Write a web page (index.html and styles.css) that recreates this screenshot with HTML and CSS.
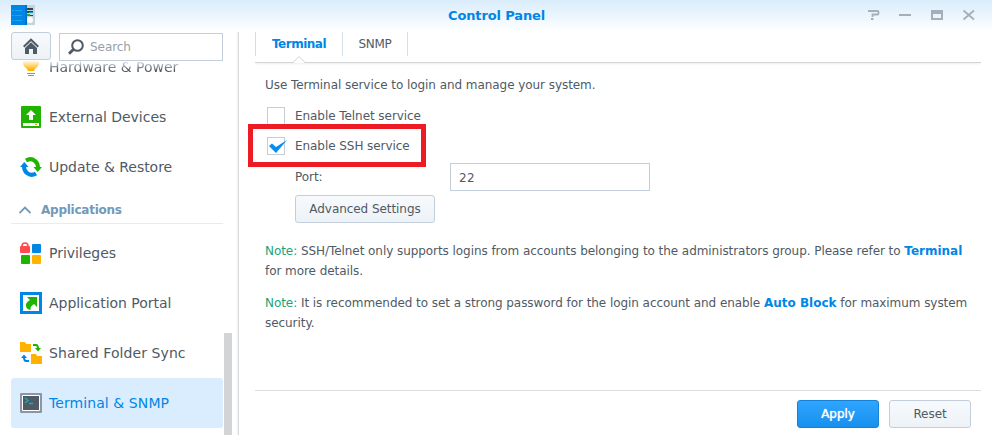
FILE: index.html
```html
<!DOCTYPE html>
<html lang="en">
<head>
<meta charset="utf-8">
<title>Control Panel</title>
<link rel="stylesheet" href="styles.css">
</head>
<body>
<div class="window">
  <header class="titlebar">
    <svg class="app-icon" width="24" height="20" viewBox="0 0 24 20"><path fill="#0086e5" d="M0 0h14v20H0z"/><path fill="#0071c8" d="M14 0h2v20h-2z"/><path fill="#c5d3dc" d="M16 0h8v20h-8z"/><path stroke="#20b7ef" stroke-opacity=".7" d="M1 5.500h2M4 5.500h7M1 10.500h2M4 10.500h7M1 15.500h2M4 15.500h7"/><path stroke="#3a434d" stroke-width="2" d="M16 4h6M16 7h6"/><path stroke="#00a6df" d="M18 7.500h4"/><path stroke="#20b700" stroke-width="2" d="M16 10h3"/><path stroke="#3a434d" d="M19 10.500h3"/><circle cx="19" cy="15" r="3" fill="#fff"/></svg>
    <h1>Control Panel</h1>
    <svg class="controls" width="108" height="12" viewBox="0 0 108 12" fill="none" stroke="#a3b0bb"><path stroke-width="1.800" d="M0 2h9.500q1 0 1 1v1.500q0 1-1 1H4.500V8M3 10h2.500"/><path stroke-width="2" d="M31 6h12"/><path fill="#a3b0bb" stroke="none" fill-rule="evenodd" d="M63 1h12v10H63zM65 5v4h8V5z"/><path stroke-width="1.800" d="M95.500 1.500l10.500 9M106 1.500l-10.500 9"/></svg>
  </header>
  <div class="body">
    <aside class="sidebar">
      <div class="toolbar">
        <button class="home" aria-label="Home"><svg width="16" height="16" viewBox="0 0 16 16"><path fill="none" stroke="#505a64" stroke-width="2" d="M.7 8.700L8 1.700l7.300 7"/><path fill="#505a64" d="M2 10l6-5.800 6 5.800v6h-4v-5H6v5H2z"/></svg></button>
        <div class="search"><svg width="16" height="16" viewBox="0 0 16 16" fill="none" stroke="#505a64"><circle cx="9.500" cy="6.500" r="5.300" stroke-width="2"/><path stroke-width="3" d="M5.300 10.500L1 14.800"/></svg><span>Search</span></div>
      </div>
      <nav class="list">
        <a class="item first"><svg width="22" height="22" viewBox="0 0 22 22"><path fill="#ffb300" d="M3 7a8 8 0 0116 0q0 3-4 6l-1 2H8l-1-2Q3 10 3 7z"/><path stroke="#89949e" d="M7 17.500h8M8 19.500h6"/></svg><span>Hardware &amp; Power</span></a>
        <a class="item"><svg width="22" height="22" viewBox="0 0 22 22"><rect x="1" width="20" height="22" rx="1" fill="#20b300"/><path fill="#fff" d="M11 4l5 5h-3v5H9V9H6zM3 17h16v3H3z"/><path stroke="#ff9600" d="M15 18.500h2"/></svg><span>External Devices</span></a>
        <a class="item"><svg width="22" height="22" viewBox="0 0 22 22" fill="none" stroke-width="4"><path stroke="#20b300" d="M6 4.500Q11 1.500 15 5q3 2 3 7"/><path fill="#20b300" d="M13.500 11H22l-4.300 5z"/><path stroke="#0086e5" d="M16 17.500Q11 20.500 7 17q-3-2-3-7"/><path fill="#0086e5" d="M8.500 11H0l4.300-5z"/></svg><span>Update &amp; Restore</span></a>
        <div class="group"><svg width="12" height="8" viewBox="0 0 12 8"><path fill="none" stroke="#7399b8" stroke-width="1.800" d="M.5 7L6 1.500 11.500 7"/></svg><span>Applications</span></div>
        <a class="item"><svg width="22" height="22" viewBox="0 0 22 22"><path fill="none" stroke="#ff4b4b" stroke-width="1.600" d="M2 6V4q0-3 3-3t3 3v2"/><rect y="4" width="10" height="7" rx="1" fill="#ff4b4b"/><rect x="12" y="2" width="9" height="9" rx="1" fill="#0086e5"/><rect x="1" y="13" width="9" height="9" rx="1" fill="#20b300"/><rect x="12" y="13" width="9" height="9" rx="1" fill="#ffb300"/></svg><span>Privileges</span></a>
        <a class="item"><svg width="22" height="22" viewBox="0 0 22 22"><path fill="#fff" stroke="#0086e5" stroke-width="3" d="M1.500 1.500h19v19h-19z"/><path fill="#20b300" d="M7 5h10v10l-3-3q-4 2-3.500 6Q5 17 6 12q1-2.500 4-4z"/></svg><span>Application Portal</span></a>
        <a class="item"><svg width="22" height="22" viewBox="0 0 22 22"><path fill="#ffb300" d="M0 0h5l1 2h5v8H0zM11 12h5l1 2h5v8H11z"/><path fill="none" stroke="#20b300" stroke-width="2" d="M13 3h3q2 0 2 4"/><path fill="#20b300" d="M15 6h6l-3 3.500z"/><path fill="none" stroke="#0086e5" stroke-width="2" d="M9 19H6q-2 0-2-4"/><path fill="#0086e5" d="M1 16h6l-3-3.500z"/></svg><span class="wide">Shared Folder Sync</span></a>
        <a class="item active"><svg width="22" height="22" viewBox="0 0 22 22"><rect y="1" width="22" height="20" rx="1" fill="#8c96a3"/><path fill="#505a64" stroke="#fff" d="M2.500 3.500h17v15h-17z"/><path fill="none" stroke="#00b8c0" stroke-width="1.300" d="M5 6l3 2.500L5 11M9 11.500h4"/></svg><span class="wide">Terminal &amp; SNMP</span></a>
      </nav>
      <div class="scrollbar"></div>
    </aside>
    <main class="content">
      <div class="tabs"><span class="tab on">Terminal</span><span class="tab">SNMP</span>
      <svg class="notch" width="14" height="8" viewBox="0 0 14 8"><path fill="#fff" stroke="#cdd0d3" d="M0 7.500h1l6-6 6 6h1"/><path stroke="#fff" d="M2 7.500h10"/></svg></div>
      <div class="form">
        <p class="intro">Use Terminal service to login and manage your system.</p>
        <div class="check"><i class="box"></i><span>Enable Telnet service</span></div>
        <div class="check"><i class="box"><svg width="18" height="14" viewBox="0 0 18 14"><path fill="#078ef0" d="M0 7l3-2.500 4 3.500 11-7-11 13z"/></svg></i><span>Enable SSH service</span><div class="highlight"></div></div>
        <div class="field"><span>Port:</span><div class="input">22</div></div>
        <button class="btn adv">Advanced Settings</button>
        <p class="note n1"><em>Note:</em> SSH/Telnet only supports logins from accounts belonging to the administrators group. Please refer to <b>Terminal</b><br>for more details.</p>
        <p class="note n2"><em>Note:</em> It is recommended to set a strong password for the login account and enable <b>Auto Block</b> for maximum system<br>security.</p>
      </div>
      <footer class="footer"><button class="btn primary">Apply</button><button class="btn">Reset</button></footer>
    </main>
  </div>
</div>
</body>
</html>
```
FILE: styles.css
```css
* { box-sizing: border-box; }
body { margin: 0; width: 992px; height: 435px; overflow: hidden; background: #fff; color: #505a64; font: 12px/20px Verdana, "DejaVu Sans", sans-serif; letter-spacing: -0.06px; }
svg { display: block; flex: none; }
p, h1 { margin: 0; }
.window { height: 435px; display: flex; flex-direction: column; background: linear-gradient(#d9ecfb, #fff 32px); }
.titlebar { height: 32px; display: grid; grid-template-columns: 1fr auto 1fr; padding: 0 16px 0 11px; align-items: center; }
.app-icon { margin-top: -2px; }
h1 { color: #0086e5; font: bold 13px/30px Verdana, "DejaVu Sans", sans-serif; letter-spacing: -0.13px; padding-left: 6px; margin: 0; }
.controls { justify-self: end; margin-top: -3px; }
.body { flex: 1; display: flex; min-height: 0; }
.sidebar { width: 239px; position: relative; padding-left: 11px; border-right: 1px solid #dadcdf; overflow: hidden; box-shadow: inset -2px 0 2px -1px #eee; }
.toolbar { display: flex; gap: 8px; height: 29px; }
.home { width: 40px; height: 28px; padding: 0; border: 1px solid #c2cedc; border-radius: 3px; background: linear-gradient(#f7fafd, #edf2f7); display: grid; place-items: center; }
.search { width: 164px; height: 28px; border: 1px solid #c2cedc; margin-top: 1px; display: flex; align-items: center; gap: 6px; padding-left: 8px; background: #fff; color: #96a0aa; }
.list { width: 212px; height: 374px; overflow: hidden; font-size: 14px; letter-spacing: -0.03px; }
.item { height: 50px; display: flex; align-items: center; gap: 7px; padding-left: 9px; border-radius: 3px; }
.item span { white-space: nowrap; }
.wide { letter-spacing: 0.08px; }
.first { margin-top: -19px; height: 50px; -webkit-mask: linear-gradient(transparent 18px, #000 28px); mask: linear-gradient(transparent 18px, #000 28px); }
.active { background: #d9edff; color: #0086e5; }
.group { height: 32px; margin-bottom: 4px; border-bottom: 1px solid #e3edf5; display: flex; align-items: center; gap: 10px; padding: 4px 0 0 8px; color: #7399b8; font-weight: bold; font-size: 12px; letter-spacing: -0.25px; }
.scrollbar { position: absolute; left: 224px; top: 301px; width: 8px; height: 110px; background: #d2d4d6; }
.content { flex: 1; padding: 0 11px 0 16px; display: flex; flex-direction: column; }
.tabs { height: 31px; border-bottom: 1px solid #d3d5d7; display: flex; position: relative; box-shadow: 0 2px 2px -1px #eee; }
.tab { height: 24px; border-right: 1px solid #d2dfeb; width: 65px; display: grid; place-items: center; letter-spacing: -0.3px; }
.tab.on { width: 88px; border-left: 1px solid #d2dfeb; color: #0086e5; font-weight: bold; letter-spacing: -0.5px; }
.notch { position: absolute; left: 37px; top: 23px; }
.form { flex: 1; padding: 12px 0 0 10px; }
.intro { margin-bottom: 9px; }
.check { height: 30px; display: flex; align-items: center; position: relative; padding-bottom: 8px; padding-top: 2px; }
.box { width: 18px; height: 18px; margin: 0 10px 0 2px; border: 1px solid #c2cedc; display: block; background: #fff; }
.box svg { margin: 1px 0 0 1px; }
.highlight { position: absolute; left: -17px; top: -10px; width: 178px; height: 43px; border: 5px solid #ed1c24; }
.field { display: flex; padding-left: 30px; height: 32px; margin-top: -1px; line-height: 28px; }
.field > span { width: 155px; }
.input { width: 200px; height: 28px; border: 1px solid #c2cedc; padding-left: 8px; line-height: 28px; letter-spacing: 0.4px; }
.btn { width: 82px; height: 28px; border: 1px solid #c2cedc; border-radius: 3px; padding: 0; background: linear-gradient(#f7fafd, #edf2f7); color: #505a64; font: inherit; letter-spacing: inherit; }
.adv { display: block; width: 140px; margin-left: 30px; }
.note { white-space: nowrap; }
.note em { color: #1ba477; font-style: normal; }
.note b { color: #0086e5; letter-spacing: 0; }
.n1 { margin: 18px 0 12px; }
.footer { height: 45px; border-top: 1px solid #dadcde; display: flex; justify-content: flex-end; gap: 10px; padding: 9px 10px 0; }
.primary { background: linear-gradient(#2fa5ff, #1790ee); border-color: #1682d5; color: #fff; text-shadow: 0 0 1px #fff; }
```
